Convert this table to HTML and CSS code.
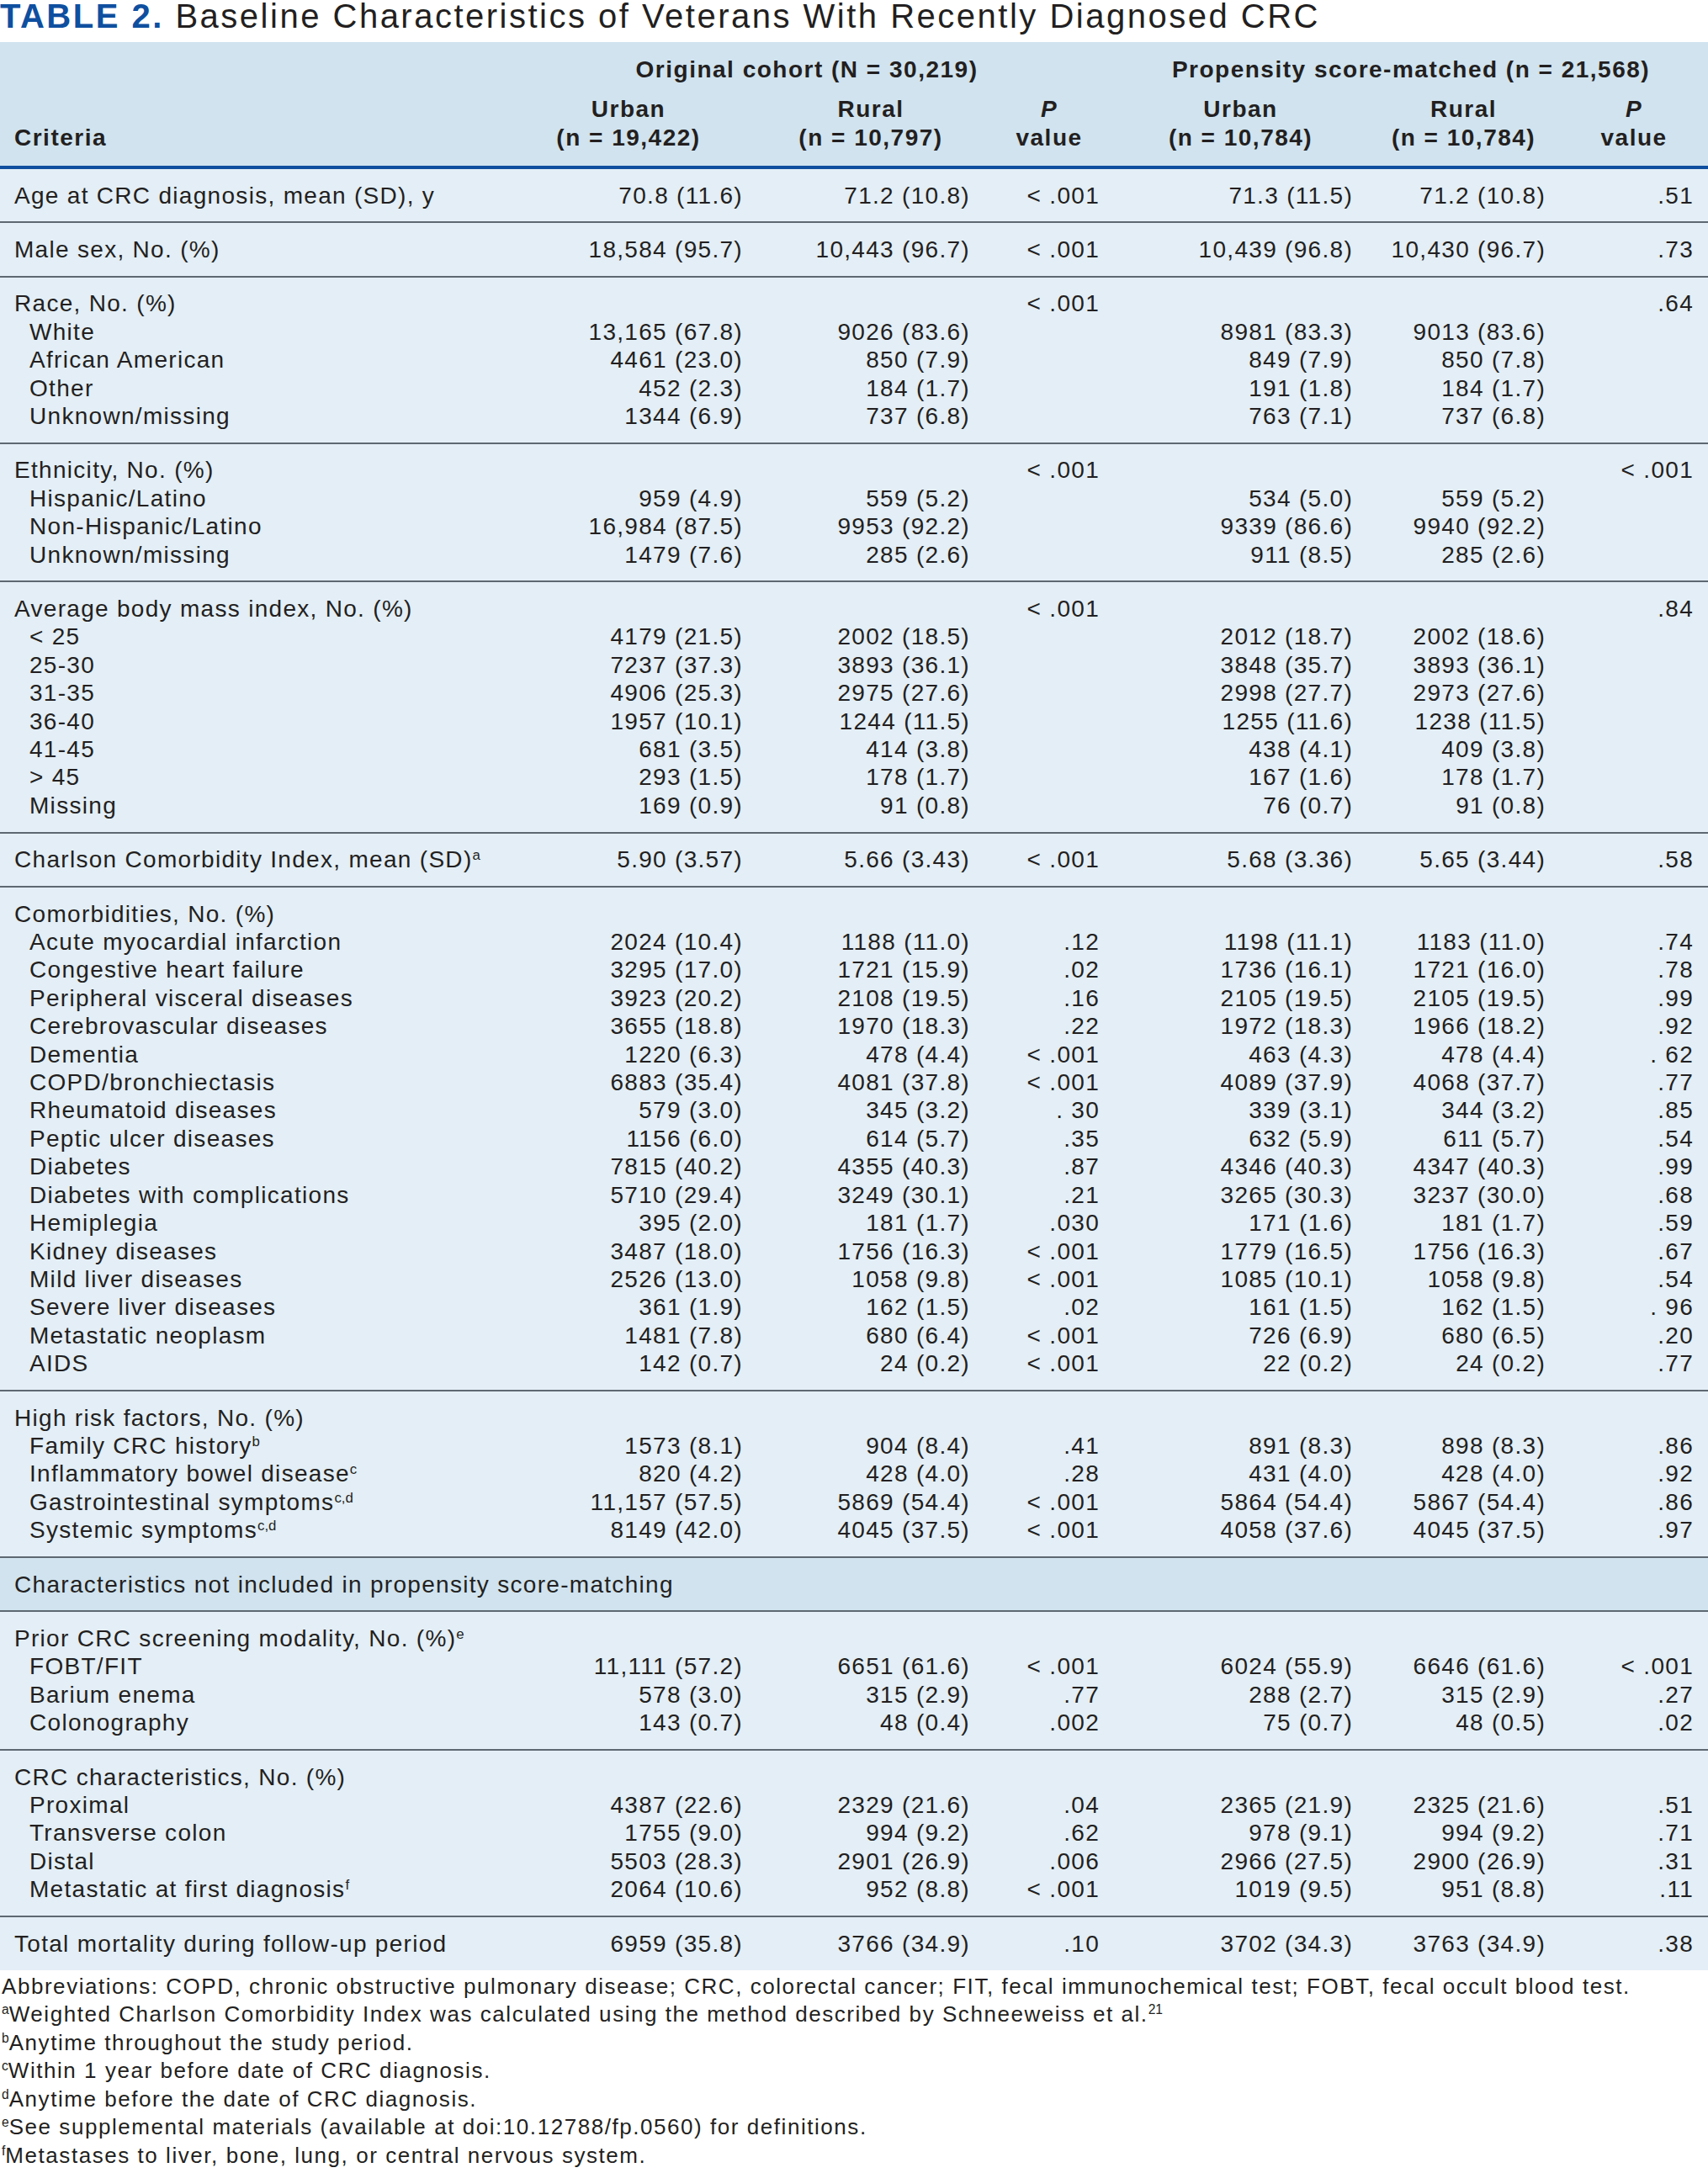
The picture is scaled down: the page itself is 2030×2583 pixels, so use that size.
FILE: index.html
```html
<!DOCTYPE html>
<html lang="en">
<head>
<meta charset="utf-8">
<title>Table 2</title>
<link rel="stylesheet" href="styles.css">
</head>
<body>
<h1 class="title"><span class="tlabel">TABLE 2.</span> Baseline Characteristics of Veterans With Recently Diagnosed CRC</h1>
<table class="tbl">
<colgroup>
<col class="c1"><col class="c2"><col class="c3"><col class="c4"><col class="c5"><col class="c6"><col class="c7">
</colgroup>
<thead>
<tr class="h1">
<th class="crit" rowspan="2">Criteria</th>
<th colspan="3">Original cohort (N = 30,219)</th>
<th colspan="3">Propensity score-matched (n = 21,568)</th>
</tr>
<tr class="h2">
<th>Urban<br>(n = 19,422)</th>
<th>Rural<br>(n = 10,797)</th>
<th><i>P</i><br>value</th>
<th>Urban<br>(n = 10,784)</th>
<th>Rural<br>(n = 10,784)</th>
<th><i>P</i><br>value</th>
</tr>
</thead>
<tbody class="grp">
<tr><td>Age at CRC diagnosis, mean (SD), y</td><td>70.8 (11.6)</td><td>71.2 (10.8)</td><td>&lt; .001</td><td>71.3 (11.5)</td><td>71.2 (10.8)</td><td>.51</td></tr>
</tbody>
<tbody class="grp">
<tr><td>Male sex, No. (%)</td><td>18,584 (95.7)</td><td>10,443 (96.7)</td><td>&lt; .001</td><td>10,439 (96.8)</td><td>10,430 (96.7)</td><td>.73</td></tr>
</tbody>
<tbody class="grp">
<tr><td>Race, No. (%)</td><td></td><td></td><td>&lt; .001</td><td></td><td></td><td>.64</td></tr>
<tr><td class="sub">White</td><td>13,165 (67.8)</td><td>9026 (83.6)</td><td></td><td>8981 (83.3)</td><td>9013 (83.6)</td><td></td></tr>
<tr><td class="sub">African American</td><td>4461 (23.0)</td><td>850 (7.9)</td><td></td><td>849 (7.9)</td><td>850 (7.8)</td><td></td></tr>
<tr><td class="sub">Other</td><td>452 (2.3)</td><td>184 (1.7)</td><td></td><td>191 (1.8)</td><td>184 (1.7)</td><td></td></tr>
<tr><td class="sub">Unknown/missing</td><td>1344 (6.9)</td><td>737 (6.8)</td><td></td><td>763 (7.1)</td><td>737 (6.8)</td><td></td></tr>
</tbody>
<tbody class="grp">
<tr><td>Ethnicity, No. (%)</td><td></td><td></td><td>&lt; .001</td><td></td><td></td><td>&lt; .001</td></tr>
<tr><td class="sub">Hispanic/Latino</td><td>959 (4.9)</td><td>559 (5.2)</td><td></td><td>534 (5.0)</td><td>559 (5.2)</td><td></td></tr>
<tr><td class="sub">Non-Hispanic/Latino</td><td>16,984 (87.5)</td><td>9953 (92.2)</td><td></td><td>9339 (86.6)</td><td>9940 (92.2)</td><td></td></tr>
<tr><td class="sub">Unknown/missing</td><td>1479 (7.6)</td><td>285 (2.6)</td><td></td><td>911 (8.5)</td><td>285 (2.6)</td><td></td></tr>
</tbody>
<tbody class="grp">
<tr><td>Average body mass index, No. (%)</td><td></td><td></td><td>&lt; .001</td><td></td><td></td><td>.84</td></tr>
<tr><td class="sub">&lt; 25</td><td>4179 (21.5)</td><td>2002 (18.5)</td><td></td><td>2012 (18.7)</td><td>2002 (18.6)</td><td></td></tr>
<tr><td class="sub">25-30</td><td>7237 (37.3)</td><td>3893 (36.1)</td><td></td><td>3848 (35.7)</td><td>3893 (36.1)</td><td></td></tr>
<tr><td class="sub">31-35</td><td>4906 (25.3)</td><td>2975 (27.6)</td><td></td><td>2998 (27.7)</td><td>2973 (27.6)</td><td></td></tr>
<tr><td class="sub">36-40</td><td>1957 (10.1)</td><td>1244 (11.5)</td><td></td><td>1255 (11.6)</td><td>1238 (11.5)</td><td></td></tr>
<tr><td class="sub">41-45</td><td>681 (3.5)</td><td>414 (3.8)</td><td></td><td>438 (4.1)</td><td>409 (3.8)</td><td></td></tr>
<tr><td class="sub">&gt; 45</td><td>293 (1.5)</td><td>178 (1.7)</td><td></td><td>167 (1.6)</td><td>178 (1.7)</td><td></td></tr>
<tr><td class="sub">Missing</td><td>169 (0.9)</td><td>91 (0.8)</td><td></td><td>76 (0.7)</td><td>91 (0.8)</td><td></td></tr>
</tbody>
<tbody class="grp">
<tr><td>Charlson Comorbidity Index, mean (SD)<sup>a</sup></td><td>5.90 (3.57)</td><td>5.66 (3.43)</td><td>&lt; .001</td><td>5.68 (3.36)</td><td>5.65 (3.44)</td><td>.58</td></tr>
</tbody>
<tbody class="grp">
<tr><td>Comorbidities, No. (%)</td><td></td><td></td><td></td><td></td><td></td><td></td></tr>
<tr><td class="sub">Acute myocardial infarction</td><td>2024 (10.4)</td><td>1188 (11.0)</td><td>.12</td><td>1198 (11.1)</td><td>1183 (11.0)</td><td>.74</td></tr>
<tr><td class="sub">Congestive heart failure</td><td>3295 (17.0)</td><td>1721 (15.9)</td><td>.02</td><td>1736 (16.1)</td><td>1721 (16.0)</td><td>.78</td></tr>
<tr><td class="sub">Peripheral visceral diseases</td><td>3923 (20.2)</td><td>2108 (19.5)</td><td>.16</td><td>2105 (19.5)</td><td>2105 (19.5)</td><td>.99</td></tr>
<tr><td class="sub">Cerebrovascular diseases</td><td>3655 (18.8)</td><td>1970 (18.3)</td><td>.22</td><td>1972 (18.3)</td><td>1966 (18.2)</td><td>.92</td></tr>
<tr><td class="sub">Dementia</td><td>1220 (6.3)</td><td>478 (4.4)</td><td>&lt; .001</td><td>463 (4.3)</td><td>478 (4.4)</td><td>. 62</td></tr>
<tr><td class="sub">COPD/bronchiectasis</td><td>6883 (35.4)</td><td>4081 (37.8)</td><td>&lt; .001</td><td>4089 (37.9)</td><td>4068 (37.7)</td><td>.77</td></tr>
<tr><td class="sub">Rheumatoid diseases</td><td>579 (3.0)</td><td>345 (3.2)</td><td>. 30</td><td>339 (3.1)</td><td>344 (3.2)</td><td>.85</td></tr>
<tr><td class="sub">Peptic ulcer diseases</td><td>1156 (6.0)</td><td>614 (5.7)</td><td>.35</td><td>632 (5.9)</td><td>611 (5.7)</td><td>.54</td></tr>
<tr><td class="sub">Diabetes</td><td>7815 (40.2)</td><td>4355 (40.3)</td><td>.87</td><td>4346 (40.3)</td><td>4347 (40.3)</td><td>.99</td></tr>
<tr><td class="sub">Diabetes with complications</td><td>5710 (29.4)</td><td>3249 (30.1)</td><td>.21</td><td>3265 (30.3)</td><td>3237 (30.0)</td><td>.68</td></tr>
<tr><td class="sub">Hemiplegia</td><td>395 (2.0)</td><td>181 (1.7)</td><td>.030</td><td>171 (1.6)</td><td>181 (1.7)</td><td>.59</td></tr>
<tr><td class="sub">Kidney diseases</td><td>3487 (18.0)</td><td>1756 (16.3)</td><td>&lt; .001</td><td>1779 (16.5)</td><td>1756 (16.3)</td><td>.67</td></tr>
<tr><td class="sub">Mild liver diseases</td><td>2526 (13.0)</td><td>1058 (9.8)</td><td>&lt; .001</td><td>1085 (10.1)</td><td>1058 (9.8)</td><td>.54</td></tr>
<tr><td class="sub">Severe liver diseases</td><td>361 (1.9)</td><td>162 (1.5)</td><td>.02</td><td>161 (1.5)</td><td>162 (1.5)</td><td>. 96</td></tr>
<tr><td class="sub">Metastatic neoplasm</td><td>1481 (7.8)</td><td>680 (6.4)</td><td>&lt; .001</td><td>726 (6.9)</td><td>680 (6.5)</td><td>.20</td></tr>
<tr><td class="sub">AIDS</td><td>142 (0.7)</td><td>24 (0.2)</td><td>&lt; .001</td><td>22 (0.2)</td><td>24 (0.2)</td><td>.77</td></tr>
</tbody>
<tbody class="grp">
<tr><td>High risk factors, No. (%)</td><td></td><td></td><td></td><td></td><td></td><td></td></tr>
<tr><td class="sub">Family CRC history<sup>b</sup></td><td>1573 (8.1)</td><td>904 (8.4)</td><td>.41</td><td>891 (8.3)</td><td>898 (8.3)</td><td>.86</td></tr>
<tr><td class="sub">Inflammatory bowel disease<sup>c</sup></td><td>820 (4.2)</td><td>428 (4.0)</td><td>.28</td><td>431 (4.0)</td><td>428 (4.0)</td><td>.92</td></tr>
<tr><td class="sub">Gastrointestinal symptoms<sup>c,d</sup></td><td>11,157 (57.5)</td><td>5869 (54.4)</td><td>&lt; .001</td><td>5864 (54.4)</td><td>5867 (54.4)</td><td>.86</td></tr>
<tr><td class="sub">Systemic symptoms<sup>c,d</sup></td><td>8149 (42.0)</td><td>4045 (37.5)</td><td>&lt; .001</td><td>4058 (37.6)</td><td>4045 (37.5)</td><td>.97</td></tr>
</tbody>
<tbody class="grp band">
<tr><td colspan="7">Characteristics not included in propensity score-matching</td></tr>
</tbody>
<tbody class="grp">
<tr><td>Prior CRC screening modality, No. (%)<sup>e</sup></td><td></td><td></td><td></td><td></td><td></td><td></td></tr>
<tr><td class="sub">FOBT/FIT</td><td>11,111 (57.2)</td><td>6651 (61.6)</td><td>&lt; .001</td><td>6024 (55.9)</td><td>6646 (61.6)</td><td>&lt; .001</td></tr>
<tr><td class="sub">Barium enema</td><td>578 (3.0)</td><td>315 (2.9)</td><td>.77</td><td>288 (2.7)</td><td>315 (2.9)</td><td>.27</td></tr>
<tr><td class="sub">Colonography</td><td>143 (0.7)</td><td>48 (0.4)</td><td>.002</td><td>75 (0.7)</td><td>48 (0.5)</td><td>.02</td></tr>
</tbody>
<tbody class="grp">
<tr><td>CRC characteristics, No. (%)</td><td></td><td></td><td></td><td></td><td></td><td></td></tr>
<tr><td class="sub">Proximal</td><td>4387 (22.6)</td><td>2329 (21.6)</td><td>.04</td><td>2365 (21.9)</td><td>2325 (21.6)</td><td>.51</td></tr>
<tr><td class="sub">Transverse colon</td><td>1755 (9.0)</td><td>994 (9.2)</td><td>.62</td><td>978 (9.1)</td><td>994 (9.2)</td><td>.71</td></tr>
<tr><td class="sub">Distal</td><td>5503 (28.3)</td><td>2901 (26.9)</td><td>.006</td><td>2966 (27.5)</td><td>2900 (26.9)</td><td>.31</td></tr>
<tr><td class="sub">Metastatic at first diagnosis<sup>f</sup></td><td>2064 (10.6)</td><td>952 (8.8)</td><td>&lt; .001</td><td>1019 (9.5)</td><td>951 (8.8)</td><td>.11</td></tr>
</tbody>
<tbody class="grp last">
<tr><td>Total mortality during follow-up period</td><td>6959 (35.8)</td><td>3766 (34.9)</td><td>.10</td><td>3702 (34.3)</td><td>3763 (34.9)</td><td>.38</td></tr>
</tbody>
</table>
<div class="notes">
<p>Abbreviations: COPD, chronic obstructive pulmonary disease; CRC, colorectal cancer; FIT, fecal immunochemical test; FOBT, fecal occult blood test.</p>
<p><sup>a</sup>Weighted Charlson Comorbidity Index was calculated using the method described by Schneeweiss et al.<sup>21</sup></p>
<p><sup>b</sup>Anytime throughout the study period.</p>
<p><sup>c</sup>Within 1 year before date of CRC diagnosis.</p>
<p><sup>d</sup>Anytime before the date of CRC diagnosis.</p>
<p><sup>e</sup>See supplemental materials (available at doi:10.12788/fp.0560) for definitions.</p>
<p><sup>f</sup>Metastases to liver, bone, lung, or central nervous system.</p>
</div>
</body>
</html>
```
FILE: styles.css
```css
html, body {
  margin: 0;
  padding: 0;
  background: #ffffff;
}
body {
  font-family: "Liberation Sans", Arial, Helvetica, sans-serif;
  color: #231f20;
  width: 2030px;
}
.title {
  margin: 0 0 12px 0;
  font-size: 40px;
  line-height: 38px;
  font-weight: normal;
  letter-spacing: 2.5px;
  color: #231f20;
  white-space: nowrap;
}
.tlabel {
  font-weight: bold;
  color: #0f4f9f;
}
.tbl {
  width: 2030px;
  table-layout: fixed;
  border-collapse: collapse;
  border-spacing: 0;
  font-size: 28px;
  line-height: 33.4px;
  letter-spacing: 1.3px;
  background: #e3eef6;
}
.c1 { width: 594px; }
.c2 { width: 306px; }
.c3 { width: 270px; }
.c4 { width: 154px; }
.c5 { width: 301px; }
.c6 { width: 229px; }
.c7 { width: 176px; }
thead {
  background: #d0e3ef;
  border-bottom: 4px solid #0f4f9f;
}
th {
  font-weight: bold;
  text-align: center;
  padding: 0 4px;
  letter-spacing: 1.5px;
  white-space: nowrap;
}
.h1 th {
  padding-top: 16px;
  padding-bottom: 0;
}
.h1 th.crit {
  text-align: left;
  vertical-align: bottom;
  padding: 0 0 17px 17px;
}
.h2 th {
  padding-top: 13.8px;
  padding-bottom: 17px;
}
td {
  padding: 0 17px 0 17px;
  text-align: right;
  white-space: nowrap;
  vertical-align: top;
}
td:first-child {
  text-align: left;
}
td.sub {
  padding-left: 35px;
}
.grp {
  border-bottom: 2px solid #5d6872;
}
.grp.last {
  border-bottom: 0;
}
.grp > tr:first-child > td {
  padding-top: 14.5px;
}
.grp > tr:last-child > td {
  padding-bottom: 14.5px;
}
.band {
  background: #d0e3ef;
}
sup {
  font-size: 60%;
  line-height: 0;
  letter-spacing: 0;
  vertical-align: 0.55em;
}
.notes {
  padding: 3px 0 0 2px;
  font-size: 26px;
  line-height: 33.5px;
  letter-spacing: 1.55px;
}
.notes p {
  margin: 0;
  white-space: nowrap;
}
```
